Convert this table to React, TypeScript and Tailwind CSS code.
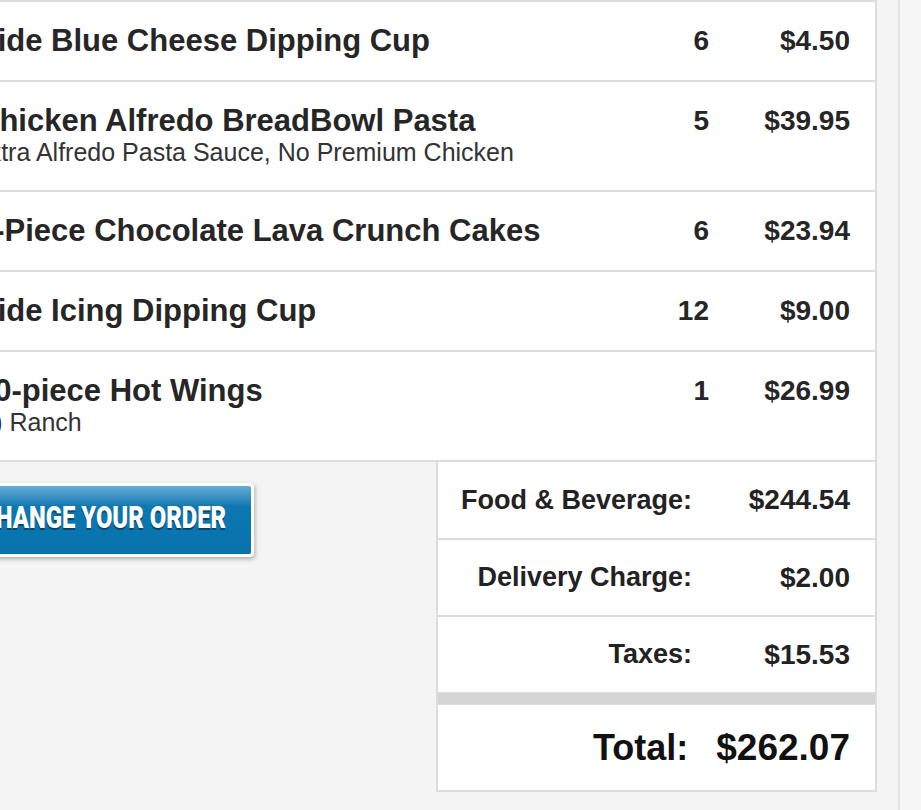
// Order summary (zoomed crop)
const items = [
  { name: "Side Blue Cheese Dipping Cup", qty: 6, price: "$4.50" },
  {
    name: "Chicken Alfredo BreadBowl Pasta",
    note: "Extra Alfredo Pasta Sauce, No Premium Chicken",
    qty: 5,
    price: "$39.95",
  },
  { name: "2-Piece Chocolate Lava Crunch Cakes", qty: 6, price: "$23.94" },
  { name: "Side Icing Dipping Cup", qty: 12, price: "$9.00" },
  { name: "10-piece Hot Wings", note: "(2) Ranch", qty: 1, price: "$26.99" },
];

const totals = [
  { label: "Food & Beverage:", value: "$244.54", h: "h-[78px] border-b-2" },
  { label: "Delivery Charge:", value: "$2.00", h: "h-[77px] border-b-2" },
  { label: "Taxes:", value: "$15.53", h: "h-[75px]" },
];

function ItemRow({ name, note, qty, price }: { name: string; note?: string; qty: number; price: string }) {
  return (
    <div className="flex border-t-2 border-[#dcdcdc] pt-[22px] pb-[23px] pl-[17px] pr-[25px]">
      <div className="flex-1 whitespace-nowrap">
        <p className="text-[31px] font-bold leading-[33px] text-[#262626]">{name}</p>
        {note && <p className="ml-[-5px] text-[25px] leading-[30px] text-[#333]">{note}</p>}
      </div>
      <p className="w-[60px] text-right text-[28px] font-bold leading-[33px] text-[#262626]">{qty}</p>
      <p className="w-[141px] text-right text-[28px] font-bold leading-[33px] text-[#262626]">{price}</p>
    </div>
  );
}

export default function App() {
  return (
    <div className="min-h-screen overflow-hidden bg-[#f7f7f7] font-['Liberation_Sans',Arial,sans-serif]">
      <div className="ml-[-40px] h-[810px] w-[940px] border-r-2 border-[#e3e3e3] bg-[#f4f4f4] pr-[21px]">
        <div className="border-r-2 border-b-2 border-[#dcdcdc] bg-white">
          {items.map((it) => (
            <ItemRow key={it.name} {...it} />
          ))}
        </div>

        <div className="flex">
          <div className="flex-1 pt-[21px]">
            <button className="ml-[-8px] block rounded-[4px] bg-white p-[3px] shadow-[1px_2px_4px_rgba(0,0,0,0.3)]">
              <span className="block w-[296px] overflow-hidden rounded-[2px] bg-gradient-to-b from-[#62aed6] via-[#0b78b2] via-30% to-[#0872ab] py-[19px] pl-[25px] text-left">
                <span className="inline-block origin-left scale-x-[0.77] whitespace-nowrap font-['Roboto',sans-serif] text-[31px] font-black leading-[26px] text-white [text-shadow:0_2px_0_#03456b]">
                  CHANGE YOUR ORDER
                </span>
              </span>
            </button>
          </div>

          <div className="w-[441px] border-x-2 border-b-2 border-[#dcdcdc] bg-white">
            {totals.map((t) => (
              <div key={t.label} className={`flex items-center border-[#dcdcdc] pr-[25px] ${t.h}`}>
                <p className="flex-1 text-right text-[27px] font-bold text-[#222]">{t.label}</p>
                <p className="w-[158px] text-right text-[28px] font-bold text-[#222]">{t.value}</p>
              </div>
            ))}
            <div className="h-[13px] border-y border-[#dedede] bg-[#d5d5d5]" />
            <div className="flex h-[85px] items-center pr-[25px]">
              <p className="flex-1 text-right text-[36px] font-bold text-[#111]">Total:</p>
              <p className="ml-[28px] text-right text-[37px] font-bold text-[#111]">$262.07</p>
            </div>
          </div>
        </div>
      </div>
    </div>
  );
}
